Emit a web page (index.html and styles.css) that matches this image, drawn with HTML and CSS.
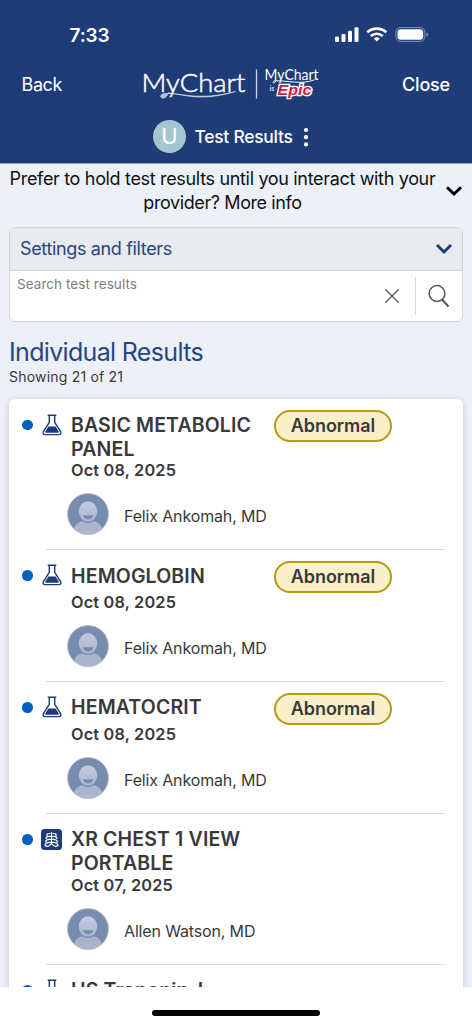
FILE: index.html
```
<!DOCTYPE html>
<html lang="en">
<head>
<meta charset="utf-8">
<title>Test Results</title>
<link rel="stylesheet" href="styles.css">
</head>
<body>
<svg width="0" height="0" class="defs" aria-hidden="true">
  <defs>
    <linearGradient id="face" x1="0" y1="0" x2="0" y2="1"><stop offset="0" stop-color="#c3cbdd"/><stop offset="1" stop-color="#a9b6d0"/></linearGradient>
    <clipPath id="round"><circle cx="21" cy="21" r="20.5"/></clipPath>
    <symbol id="flask" viewBox="0 0 20 22">
      <path d="M6.2 1.300h7.600M7.300 1.800v6.500L1.500 17.400c-1 1.700-.2 3.200 1.600 3.200h13.800c1.800 0 2.600-1.500 1.600-3.200L12.700 8.300V1.800" fill="none" stroke="#1e3c78" stroke-width="1.400" stroke-linecap="round" stroke-linejoin="round"/>
      <path d="M6.4 12.600h7.200l3 4.700c.5.900.2 1.400-.7 1.400H4.100c-.9 0-1.200-.5-.7-1.400z" fill="#1e3c78"/>
    </symbol>
    <symbol id="avatar" viewBox="0 0 42 42">
      <circle cx="21" cy="21" r="20.500" fill="#788bb1"/>
      <g clip-path="url(#round)"><path d="M6 42c0-9 4-14.500 15-14.500S36 33 36 42z" fill="#a9b5cf"/>
      <ellipse cx="21" cy="19" rx="10.300" ry="11" fill="#788bb1"/></g>
      <ellipse cx="21" cy="18.500" rx="9.200" ry="10.300" fill="url(#face)"/>
      <path d="M16 22.300h10.400c-.5 5.300-9.900 5.300-10.400 0z" fill="#788bb1"/>
      <circle cx="21" cy="21" r="20.500" fill="none" stroke="#bdbfc4"/>
    </symbol>
  </defs>
</svg>
<div class="screen">
  <header class="top">
    <div class="status">
      <span class="clock">7:33</span>
      <svg class="signals" width="94" height="16" viewBox="0 0 94 16" fill="#fff">
        <rect x="0" y="9.500" width="4" height="5.500" rx="1"/><rect x="6.500" y="7" width="4" height="8" rx="1"/><rect x="13" y="3.700" width="4" height="11.300" rx="1"/><rect x="19.500" y="0.300" width="4" height="14.700" rx="1"/>
        <g fill="none" stroke="#fff" stroke-width="2.700"><path d="M32.300 5.300C37.800.5 45.800.5 51.300 5.300"/><path d="M35.800 9c3.500-3 8.500-3 12 0"/></g>
        <path d="M38.800 11.400c2-1.500 4-1.500 6 0l-3 3.200z"/>
        <rect x="60.900" y=".6" width="29" height="13.800" rx="4.500" fill="none" stroke="#8294b9"/><rect x="62.500" y="2.300" width="25.700" height="10.500" rx="3.200"/><path d="M91.500 5.200c2 .7 2 3.900 0 4.600z" fill="#8294b9"/>
      </svg>
    </div>
    <nav class="nav">
      <span class="back">Back</span>
      <svg class="logo" width="178" height="34" viewBox="0 0 178 34">
        <g fill="#fff" font-family="Lato, sans-serif">
          <text x="-2.500" y="24.800" font-size="26" font-weight="300" textLength="104" lengthAdjust="spacingAndGlyphs" stroke="#fff" stroke-width=".5">MyChart</text>
          <text x="120.500" y="13.300" font-size="14.500" textLength="54" lengthAdjust="spacingAndGlyphs">MyChart</text>
          <text x="125.500" y="24" font-size="8" font-style="italic">is</text>
        </g>
        <path d="M25 25c-2 5-5 7-7.500 5.700-2-1.300-.5-4 4-4.200C40 26 53 36 91.500 24.500 57 33.500 40 27 25 26.200" fill="#fff" stroke="#fff" stroke-width=".5" fill-opacity=".65"/>
        <path d="M112.500 2.500v29" stroke="#cdd5e4" stroke-width="1.300"/>
        <path d="M132 14c-2 3-4 2.500-2-.2 14-.5 27 4.200 40.500-1" fill="none" stroke="#fff" stroke-width="1"/>
        <text class="epic" x="133.500" y="27.800" font-size="15" textLength="34" lengthAdjust="spacingAndGlyphs">Epic</text>
      </svg>
      <span class="close">Close</span>
    </nav>
    <div class="heading">
      <span class="initial">U</span><h1>Test Results</h1>
      <svg width="6" height="20" viewBox="0 0 6 20" fill="#fff"><circle cx="3" cy="3" r="2.100"/><circle cx="3" cy="10.200" r="2.100"/><circle cx="3" cy="17.400" r="2.100"/></svg>
    </div>
  </header>
  <main class="content">
    <section class="notice">
      <p><span class="l1">Prefer to hold test results until you interact with your</span><br><span class="l2">provider? More info</span></p>
      <svg width="18" height="12" viewBox="0 0 18 12"><path d="M2 2.200l7 6.800 7-6.800" fill="none" stroke="#000" stroke-width="2.900"/></svg>
    </section>
    <section class="filters">
      <div class="settings"><span>Settings and filters</span>
        <svg width="18" height="12" viewBox="0 0 18 12"><path d="M2 2l7 7 7-7" fill="none" stroke="#1e3c78" stroke-width="2.900"/></svg></div>
      <div class="search"><span class="placeholder">Search test results</span>
        <svg class="clear" width="14" height="14" viewBox="0 0 14 14"><path d="M.5.5l13 13M13.500.5l-13 13" stroke="#555" stroke-width="1.200"/></svg>
        <span class="find"><svg width="22" height="24" viewBox="0 0 22 24" fill="none" stroke="#555"><circle cx="9" cy="9.500" r="7.900" stroke-width="1.500"/><path d="M14 15.500l6.500 7" stroke-width="2"/></svg></span>
      </div>
    </section>
    <h2>Individual Results</h2>
    <p class="count">Showing 21 of 21</p>
    <section class="results">
      <article class="item">
        <i class="dot"></i><svg class="kind" width="20" height="22"><use href="#flask"/></svg>
        <div class="body"><div class="head"><h3>BASIC METABOLIC<br>PANEL</h3><span class="badge">Abnormal</span></div>
          <p class="date">Oct 08, 2025</p>
          <div class="provider"><svg width="42" height="42"><use href="#avatar"/></svg><span>Felix Ankomah, MD</span></div></div>
      </article>
      <article class="item">
        <i class="dot"></i><svg class="kind" width="20" height="22"><use href="#flask"/></svg>
        <div class="body"><div class="head"><h3>HEMOGLOBIN</h3><span class="badge">Abnormal</span></div>
          <p class="date">Oct 08, 2025</p>
          <div class="provider"><svg width="42" height="42"><use href="#avatar"/></svg><span>Felix Ankomah, MD</span></div></div>
      </article>
      <article class="item">
        <i class="dot"></i><svg class="kind" width="20" height="22"><use href="#flask"/></svg>
        <div class="body"><div class="head"><h3>HEMATOCRIT</h3><span class="badge">Abnormal</span></div>
          <p class="date">Oct 08, 2025</p>
          <div class="provider"><svg width="42" height="42"><use href="#avatar"/></svg><span>Felix Ankomah, MD</span></div></div>
      </article>
      <article class="item">
        <i class="dot"></i>
        <svg class="kind scan" width="21" height="21" viewBox="0 0 21 21"><rect width="21" height="21" rx="3.500" fill="#1e3c78"/><g fill="none" stroke="#fff" stroke-width="1.150" stroke-linecap="round"><path d="M10.500 3.500v11.500M9 4.500L6 5M12 4.500l3 .5M10 7.500C7.500 7 5.500 7.500 5 9.500M11 7.500c2.500-.5 4.500 0 5 2M10 10.500c-3-.4-5 .3-5.500 2.500M11 10.500c3-.4 5 .3 5.500 2.500M10 13.500c-3-.3-5.500.3-6 3 2 1.500 4.500 1 5.500-1.200M11 13.500c3-.3 5.500.3 6 3-2 1.500-4.500 1-5.500-1.200M6 5v3M15 5v3"/></g></svg>
        <div class="body"><div class="head"><h3>XR CHEST 1 VIEW<br>PORTABLE</h3></div>
          <p class="date">Oct 07, 2025</p>
          <div class="provider"><svg width="42" height="42"><use href="#avatar"/></svg><span>Allen Watson, MD</span></div></div>
      </article>
      <article class="item">
        <i class="dot"></i><svg class="kind" width="20" height="22"><use href="#flask"/></svg>
        <div class="body"><div class="head"><h3>HS Troponin-I</h3></div></div>
      </article>
    </section>
  </main>
  <footer class="home"><i></i></footer>
</div>
</body>
</html>
```
FILE: styles.css
```
* { box-sizing: border-box; }
body { margin: 0; font-family: Inter, sans-serif; color: #393939; background: #fff; }
h1, h2, h3, p { margin: 0; }
svg { display: block; flex: none; }
.defs { position: absolute; }
.screen { width: 472px; height: 1024px; display: flex; flex-direction: column; overflow: hidden; }
.top { height: 164px; flex: none; background: #1e3c78; border-bottom: 1px solid #94a2c4; color: #fff; white-space: nowrap; }
.status { height: 60px; padding: 24px 41px 0 69.500px; display: flex; justify-content: space-between; }
.clock { font-size: 19px; line-height: 24px; font-weight: 600; letter-spacing: -.15px; }
.signals { margin-top: 3px; margin-right: 2px; }
.nav { height: 48px; padding: 0 22px 0 21px; display: grid; grid-template-columns: 123px 178px 1fr; align-items: center; font-size: 18px; }
.logo { margin-top: -1px; overflow: visible; }
.back { letter-spacing: -.4px; padding-left: .5px; }
.close { justify-self: end; font-weight: 500; letter-spacing: -.2px; }
.epic { font-family: "Liberation Sans", sans-serif; font-weight: 700; font-style: italic; fill: #ce163f; stroke: #fff; stroke-width: 2.600px; paint-order: stroke; }
.heading { height: 56px; display: flex; align-items: center; padding: 1px 0 0 153px; }
.initial { width: 33px; height: 33px; border-radius: 50%; background: #a5c6d0; display: flex; align-items: center; justify-content: center; font-size: 22px; line-height: 33px; }
h1 { margin-left: 8.500px; width: 108.500px; font-size: 17.500px; font-weight: 500; letter-spacing: -.3px; }
.content { height: 823px; flex: none; overflow: hidden; background: #ecf0f8; padding: 3px 9px 0; }
.notice { height: 60px; display: flex; align-items: flex-start; justify-content: space-between; color: #111; white-space: nowrap; }
.notice p { width: 427px; text-align: center; font-size: 18px; line-height: 23.500px; }
.notice svg { margin-top: 18px; }
.l1 { letter-spacing: -.33px; }
.l2 { letter-spacing: -.4px; }
.filters { height: 95px; border: 1px solid #d2d4d8; border-radius: 6px; background: #fff; overflow: hidden; }
.settings { height: 43px; padding: 0 9px 0 10px; border-bottom: 1px solid #d2d4d8; background: #e7eaee; display: flex; align-items: center; justify-content: space-between; color: #26467f; font-size: 18px; letter-spacing: -.35px; }
.settings span { margin-top: -2px; }
.search { height: 50px; display: flex; align-items: center; padding-left: 7px; }
.placeholder { align-self: flex-start; width: 368px; padding-top: 4.500px; line-height: 16px; font-size: 13.500px; letter-spacing: .06px; color: #7e7e7e; }
.find { margin-left: 16px; height: 38px; width: 47px; border-left: 1px solid #d6d6d6; display: flex; align-items: center; padding-left: 12px; }
h2 { margin-top: 15px; height: 31px; font-size: 25px; line-height: 31px; font-weight: 400; letter-spacing: -.67px; color: #26467f; }
.count { height: 31px; line-height: 17px; font-size: 14px; letter-spacing: .2px; }
.results { width: 454px; height: 700px; background: #fff; border-radius: 6px; box-shadow: 0 2px 6px rgba(40,55,90,.24); }
.item { display: flex; align-items: flex-start; padding: 11px 18px 0 13px; }
.dot { width: 10.500px; height: 10.500px; border-radius: 50%; background: #0460bd; margin-top: 9.500px; flex: none; }
.kind { margin: 3.500px 0 0 9px; }
.scan { margin: 4px -.5px 0 8.500px; }
.body { flex: 1; padding-left: 9.500px; position: relative; }
.item:not(:last-child) .body::after { content: ""; position: absolute; left: -15.500px; right: 0; bottom: 0; height: 1px; background: #dcdcdc; }
.head { display: flex; min-height: 32px; align-items: flex-start; }
h3 { width: 203px; padding-top: 2.600px; font-size: 19.500px; line-height: 24.300px; font-weight: 600; letter-spacing: .14px; white-space: nowrap; }
.badge { width: 118px; height: 32px; border: 2px solid #b59b10; border-radius: 16px; background: #f9f0ca; display: flex; align-items: center; justify-content: center; font-size: 18px; line-height: 26px; font-weight: 600; letter-spacing: -.05px; }
.date { height: 18px; line-height: 19px; font-size: 16.300px; font-weight: 600; letter-spacing: .18px; }
.provider { height: 70.800px; padding-top: 13.800px; display: flex; align-items: flex-start; margin-left: -4px; }
.provider span { margin-left: 15px; line-height: 46.500px; font-size: 16px; letter-spacing: -.15px; white-space: nowrap; }
.home { height: 37px; background: #fff; display: flex; justify-content: center; padding-top: 22.500px; }
.home i { width: 168px; height: 6px; border-radius: 3px; background: #000; }
```
